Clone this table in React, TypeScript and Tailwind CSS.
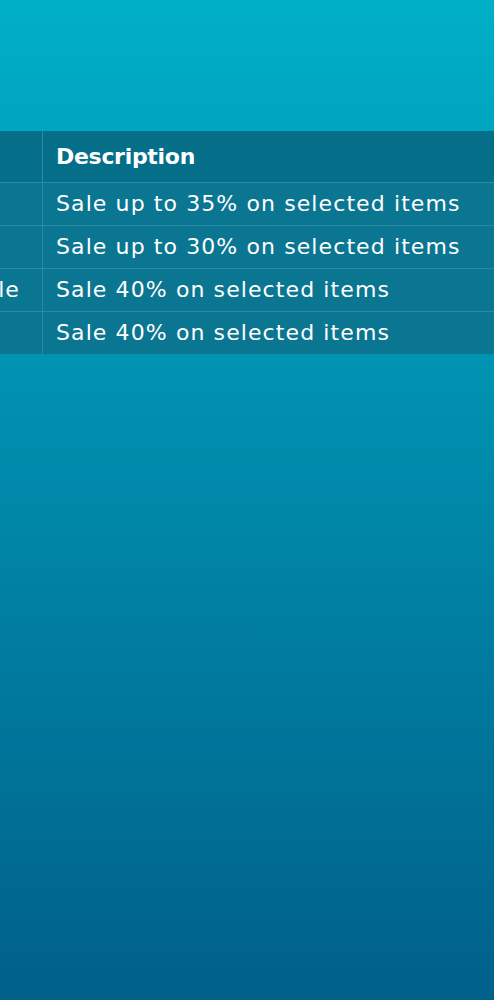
import React from "react";

const rows = [
  { name: "Promo", desc: "Sale up to 35% on selected items", right: false },
  { name: "Deal", desc: "Sale up to 30% on selected items", right: false },
  { name: "Black Friday Sale", desc: "Sale 40% on selected items", right: true },
  { name: "Offer", desc: "Sale 40% on selected items", right: false },
];

export default function App() {
  return (
    <div
      className="w-full h-[1000px] overflow-hidden bg-gradient-to-b from-[#00afc8] via-[#0088a9] to-[#00608a] pt-[131px]"
      style={{ fontFamily: "'DejaVu Sans', Inter, sans-serif" }}
    >
      <div className="overflow-hidden">
        <table className="ml-[-158px] border-collapse text-white text-[22px]">
          <thead>
            <tr className="bg-[#056e89] h-[51px]">
              <th className="w-[200px] border-r border-[#2a8ba3] px-[13px] text-left font-semibold"></th>
              <th className="w-[452px] px-[13px] text-left font-semibold tracking-[-0.3px]">Description</th>
            </tr>
          </thead>
          <tbody>
            {rows.map((r, i) => (
              <tr key={i} className="bg-[#0b7691] h-[43px] border-t border-[#2a8ba3]">
                <td className="border-r border-[#2a8ba3] pl-[13px] pr-[22px] whitespace-nowrap tracking-[1.1px]">
                  <div className={"w-[165px] overflow-hidden flex " + (r.right ? "justify-end" : "justify-start")}>
                    <span className="shrink-0">{r.name}</span>
                  </div>
                </td>
                <td className="px-[13px] text-left whitespace-nowrap tracking-[1.1px]">{r.desc}</td>
              </tr>
            ))}
          </tbody>
        </table>
      </div>
    </div>
  );
}
